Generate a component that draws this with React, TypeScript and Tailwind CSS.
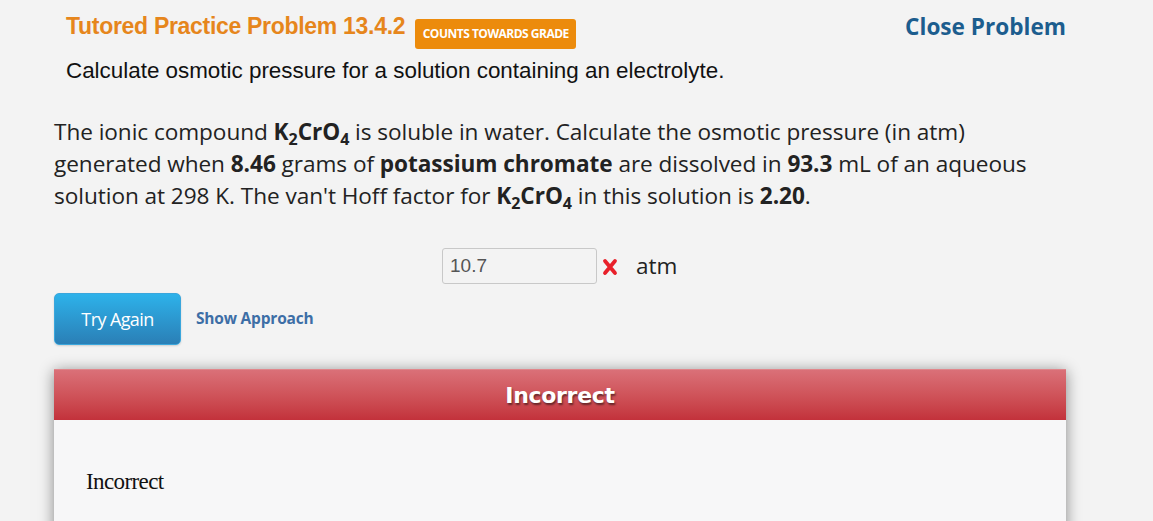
import React from 'react';

const Sub: React.FC<{ children: React.ReactNode }> = ({ children }) => (
    <sub className="text-[16px] leading-none bottom-[-5px]">{children}</sub>
);

const K2CrO4: React.FC = () => (
    <b className="font-bold">
        K<Sub>2</Sub>CrO<Sub>4</Sub>
    </b>
);

const App: React.FC = () => {
    return (
        <div className="w-[1153px] h-[521px] overflow-hidden bg-[#f3f3f3]">
            <div className="w-[1012px] ml-[54px]">
                {/* header */}
                <div className="flex items-start justify-between pt-[12px]">
                    <div className="flex items-start pl-[12px]">
                        <h1 className="text-[23px] font-bold text-[#e6861c] font-['Liberation_Sans',Arial,sans-serif] tracking-[-0.3px] leading-[28px]">
                            Tutored Practice Problem 13.4.2
                        </h1>
                        <span className="ml-[10px] mt-[7px] h-[30px] w-[161px] flex items-center justify-center rounded-[3px] bg-[#ec8b0c] text-white text-[12px] font-bold font-['Open_Sans',sans-serif] tracking-[-0.5px]">
                            COUNTS TOWARDS GRADE
                        </span>
                    </div>
                    <a className="text-[22.6px] font-bold text-[#1c5d8e] font-['Open_Sans',sans-serif] leading-[30px]">
                        Close Problem
                    </a>
                </div>
                <p className="pl-[12px] mt-[9px] text-[22.4px] text-[#111] font-['Liberation_Sans',Arial,sans-serif] leading-[26px]">
                    Calculate osmotic pressure for a solution containing an electrolyte.
                </p>

                {/* question */}
                <p className="mt-[32px] w-[990px] text-[22.6px] text-[#222] font-['Open_Sans',sans-serif] leading-[32px] tracking-[-0.05px]">
                    The ionic compound <K2CrO4 /> is soluble in water. Calculate the osmotic pressure (in atm) generated when <b>8.46</b> grams of <b>potassium chromate</b> are dissolved in <b>93.3</b> mL of an aqueous solution at 298 K. The van't Hoff factor for <K2CrO4 /> in this solution is <b>2.20</b>.
                </p>

                {/* answer */}
                <div className="flex items-center mt-[36px] pl-[388px]">
                    <input
                        readOnly
                        value="10.7"
                        className="w-[155px] h-[36px] px-[7px] border border-[#c8c8c8] rounded-[3px] bg-[#f3f3f3] text-[19px] text-[#555] font-['Liberation_Sans',Arial,sans-serif] outline-none"
                    />
                    <svg width="18" height="18" viewBox="0 0 18 18" className="ml-[4px] mt-[2px]">
                        <path d="M4 3 L14 15 M14 3 L4 15" stroke="#e8202a" strokeWidth="3.8" strokeLinecap="round" />
                    </svg>
                    <span className="ml-[17px] text-[22.5px] text-[#222] font-['Open_Sans',sans-serif]">atm</span>
                </div>

                {/* actions */}
                <div className="flex items-center mt-[9px]">
                    <button className="w-[127px] h-[52px] rounded-[5px] bg-gradient-to-b from-[#2db2ea] to-[#2a7fb6] border border-[#3aa6dc] text-white text-[18px] font-['Open_Sans',sans-serif] tracking-[-0.6px] shadow-[0_1px_2px_rgba(0,0,0,0.15)]">
                        Try Again
                    </button>
                    <a className="ml-[15px] text-[15.5px] font-bold text-[#3d6ea6] font-['Open_Sans',sans-serif] tracking-[-0.2px]">
                        Show Approach
                    </a>
                </div>

                {/* feedback modal */}
                <div className="mt-[24px] shadow-[0_2px_14px_rgba(0,0,0,0.45)]">
                    <div className="h-[51px] flex items-center justify-center bg-gradient-to-b from-[#da7078] to-[#c3313b] border-t border-[#e0868b]">
                        <span className="text-white text-[22px] font-bold font-['DejaVu_Sans',Verdana,sans-serif] tracking-[-0.3px] [text-shadow:1px_2px_2px_rgba(0,0,0,0.5)]">
                            Incorrect
                        </span>
                    </div>
                    <div className="bg-[#f7f7f8] h-[160px] pt-[49px] pl-[32px]">
                        <p className="text-[23px] leading-[26px] text-[#111] font-['Liberation_Serif','Times_New_Roman',serif] tracking-[-0.6px]">
                            Incorrect
                        </p>
                    </div>
                </div>
            </div>
        </div>
    );
};

export default App;
